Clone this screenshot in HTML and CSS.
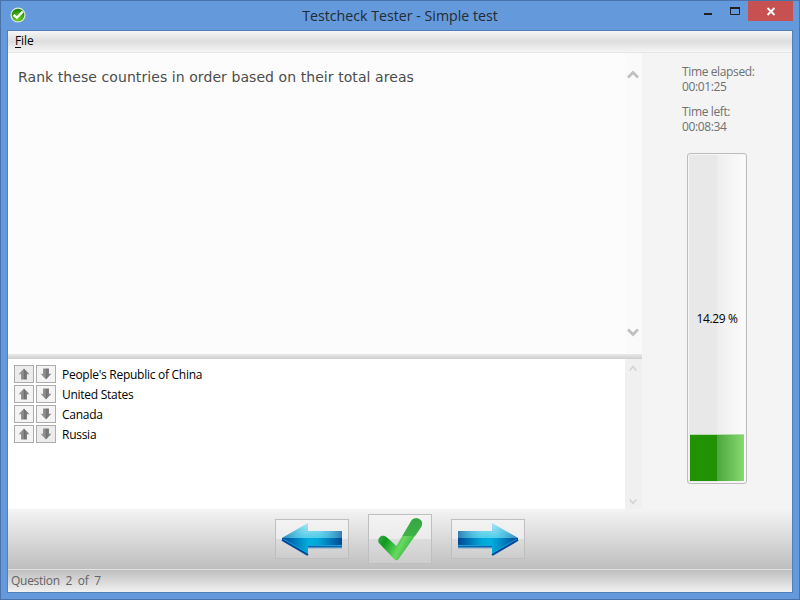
FILE: index.html
```html
<!DOCTYPE html>
<html lang="en">
<head>
<meta charset="utf-8">
<title>Testcheck Tester - Simple test</title>
<link rel="stylesheet" href="styles.css">
</head>
<body>
<svg class="defs" width="0" height="0" aria-hidden="true">
  <defs>
    <linearGradient id="blueTop" x1="0" y1="0" x2="0" y2="1"><stop offset="0" stop-color="#b5e8f5"/><stop offset=".6" stop-color="#3cc8e6"/><stop offset="1" stop-color="#2fbfe2"/></linearGradient>
    <linearGradient id="blueBottom" x1="0" y1="0" x2="1" y2="0"><stop offset="0" stop-color="#00469b"/><stop offset=".45" stop-color="#00b0de"/><stop offset=".6" stop-color="#00a8da"/><stop offset="1" stop-color="#004795"/></linearGradient>
    <linearGradient id="blueShade" x1="0" y1="0" x2="1" y2="0"><stop offset="0" stop-color="#286ca9" stop-opacity=".8"/><stop offset=".4" stop-color="#35c6e8" stop-opacity=".1"/><stop offset=".6" stop-color="#35c6e8" stop-opacity=".2"/><stop offset="1" stop-color="#286ca9" stop-opacity=".85"/></linearGradient>
    <linearGradient id="tick" gradientUnits="userSpaceOnUse" x1="4" y1="18" x2="34" y2="34"><stop offset="0" stop-color="#2fa63c"/><stop offset=".2" stop-color="#0f9a20"/><stop offset=".65" stop-color="#66d960"/><stop offset="1" stop-color="#35b13f"/></linearGradient>
    <linearGradient id="tickTop" gradientUnits="userSpaceOnUse" x1="0" y1="0" x2="0" y2="19"><stop offset="0" stop-color="#35a43f"/><stop offset="1" stop-color="#3db34a"/></linearGradient>
    <linearGradient id="gray" x1="0" y1="0" x2="1" y2="0"><stop offset="0" stop-color="#a0a0a0"/><stop offset=".5" stop-color="#858585"/><stop offset=".52" stop-color="#707070"/><stop offset="1" stop-color="#909090"/></linearGradient>
    <radialGradient id="badge" cx=".5" cy=".8" r=".8"><stop offset="0" stop-color="#6bd51b"/><stop offset="1" stop-color="#16810b"/></radialGradient>
    <clipPath id="upperHalf"><rect width="62" height="17"/></clipPath>
    <clipPath id="lowerHalf"><rect y="17" width="62" height="20"/></clipPath>
    <symbol id="up" viewBox="0 0 12 12"><path d="M6 .5 11.5 6.2H9V11.5H3V6.2H.5Z" fill="url(#gray)"/></symbol>
    <symbol id="down" viewBox="0 0 12 12"><path d="M3 .5H9V5.8H11.5L6 11.5 .5 5.8H3Z" fill="url(#gray)"/></symbol>
    <symbol id="arrow" viewBox="0 0 62 36">
      <path d="M1 19 26 35.5V28H61V25L26 23Z" fill="#5f9bc9" opacity=".4"/>
      <path d="M1 17 27 2V10H61V26H27V34L1 19Z" fill="url(#blueTop)" clip-path="url(#upperHalf)"/>
      <path d="M1 17 27 2V10H61V26H27V34L1 19Z" fill="url(#blueShade)" clip-path="url(#upperHalf)"/>
      <path d="M1 15H61V26H27V34L1 19Z" fill="url(#blueBottom)" clip-path="url(#lowerHalf)"/>
      <path d="M27 24.5H61" stroke="#1b9fd6" stroke-width="1"/>
      <path d="M27 25.8H61" stroke="#0566b2" stroke-width="1.6"/>
      <path d="M1 19 27 34" fill="none" stroke="#004598" stroke-width="2"/>
      <path d="M2 18 26 31.5" fill="none" stroke="#13a4d7" stroke-width=".8"/>
    </symbol>
  </defs>
</svg>
<div class="window">
  <header class="titlebar">
    <svg class="app-icon" viewBox="0 0 16 16"><circle cx="8" cy="8" r="7.6" fill="#dce9d8"/><circle cx="8" cy="8" r="6.3" fill="url(#badge)"/><path d="m3.6 8 3.2 2.7L12.8 4.6" fill="none" stroke="#fff" stroke-width="2.3"/></svg>
    <div class="title"><span>Testcheck Tester - Simple test</span></div>
    <svg class="controls" width="93" height="22" viewBox="0 0 93 22"><path d="M4 12H12V14H4Z" fill="#202020"/><path d="M30.5 7.5H39.5V13.5H30.5Z" fill="none" stroke="#202020"/><path d="M30 7H40" stroke="#202020" stroke-width="2"/><path d="M48 0H93V20H48Z" fill="#c75050"/><path d="m67.5 7 7 7m0-7-7 7" stroke="#fff" stroke-width="1.8"/></svg>
  </header>
  <main class="client">
    <nav class="menu"><span><u>F</u>ile</span></nav>
    <div class="workspace">
      <div class="panes">
        <section class="question">
          <div class="prompt"><span>Rank these countries in order based on their total areas</span></div>
          <div class="scroll"><svg width="12" height="9" viewBox="0 0 12 9"><path d="m1 7.5 5-5 5 5" fill="none" stroke="#c0c0c0" stroke-width="2.8"/></svg><svg width="12" height="9" viewBox="0 0 12 9"><path d="m1 1.5 5 5 5-5" fill="none" stroke="#c0c0c0" stroke-width="2.8"/></svg></div>
        </section>
        <div class="splitter"></div>
        <section class="answers">
          <div class="list">
            <div class="item"><button class="hot"><svg><use href="#up"/></svg></button><button><svg><use href="#down"/></svg></button><span>People's Republic of China</span></div>
            <div class="item"><button><svg><use href="#up"/></svg></button><button><svg><use href="#down"/></svg></button><span>United States</span></div>
            <div class="item"><button><svg><use href="#up"/></svg></button><button><svg><use href="#down"/></svg></button><span>Canada</span></div>
            <div class="item"><button><svg><use href="#up"/></svg></button><button class="hot"><svg><use href="#down"/></svg></button><span>Russia</span></div>
          </div>
          <div class="scroll small"><svg width="8" height="7" viewBox="0 0 8 7"><path d="m.7 5.5 3.3-4 3.3 4" fill="none" stroke="#d0d0d0" stroke-width="1.4"/></svg><svg width="8" height="7" viewBox="0 0 8 7"><path d="m.7 1.5 3.3 4 3.3-4" fill="none" stroke="#d0d0d0" stroke-width="1.4"/></svg></div>
        </section>
      </div>
      <aside class="side">
        <div class="time"><div>Time elapsed:</div><div>00:01:25</div></div>
        <div class="time"><div>Time left:</div><div>00:08:34</div></div>
        <div class="progress"><div class="fill"></div><span class="percent">14.29 %</span></div>
      </aside>
    </div>
    <div class="toolbar">
      <button class="nav"><svg width="62" height="36"><use href="#arrow"/></svg></button>
      <button class="confirm"><svg width="46" height="44" viewBox="0 0 46 44"><path d="M1.500 25.500C0 20 6 16.500 10 20.500L19.500 29 34.500 3.500C38-1 46 2 45 7.500C44.500 10 42 13 40 16L22 41.500C20.500 44 19 43.500 17 42Z" fill="url(#tick)"/><path d="M25.400 19 34.500 3.500C38-1 46 2 45 7.500C44.500 10 42 13 40 16L37.900 19Z" fill="url(#tickTop)"/></svg></button>
      <button class="nav next"><svg width="62" height="36"><use href="#arrow"/></svg></button>
    </div>
    <footer class="status"><span>Question&nbsp; 2&nbsp; of&nbsp; 7</span></footer>
  </main>
</div>
</body>
</html>
```
FILE: styles.css
```css
* { box-sizing: border-box; }
body { margin: 0; overflow: hidden; font: 12px/15px "Open Sans", sans-serif; color: #000; }
.defs { position: absolute; }
.window { width: 800px; height: 600px; border: 1px solid #4a73ab; background: #6499db; padding: 0 6px 6px; }
.titlebar { height: 29px; display: grid; grid-template-columns: 93px 1fr 93px; }
.app-icon { width: 16px; height: 16px; margin: 6px 0 0 3px; }
.title { text-align: center; font-size: 14.2px; line-height: 30px; color: #242b33; white-space: nowrap; }
.client { width: 786px; height: 563px; border: 1px solid #507fb9; display: flex; flex-direction: column; }
.menu { flex: 0 0 22px; border-bottom: 1px solid #e6e6e6; background: linear-gradient(#f5f5f5, #dedede 50%, #f5f5f5); padding: 2px 7px; line-height: 15px; letter-spacing: -.1px; }
.menu u { text-underline-offset: 2px; }
.workspace { flex: 0 0 456px; display: grid; grid-template-columns: 634px 1fr; background: #f4f4f4; }
.panes { display: flex; flex-direction: column; }
.question { flex: 0 0 301px; display: grid; grid-template-columns: 1fr 17px; background: #fcfcfc; }
.prompt { padding: 14px 10px; font: 14px/20px "DejaVu Sans", sans-serif; letter-spacing: .072px; color: #4c4c4c; white-space: nowrap; }
.scroll { background: #fafafa; display: flex; flex-direction: column; align-items: flex-start; justify-content: space-between; padding: 17px 0 17px 2px; }
.splitter { flex: 0 0 5px; background: linear-gradient(#e9e9e9, #cecece); }
.answers { flex: 1; display: grid; grid-template-columns: 1fr 17px; background: #fff; }
.small { background: #f0f0f0; padding: 6px 0 4px 4px; }
.list { padding: 6px; }
.item { height: 20px; display: flex; gap: 2px; }
.item button { width: 20px; height: 18px; padding: 0; border: 1px solid #acacac; background: #f4f4f4; display: grid; place-items: center; }
.item button.hot { background: #ececec; }
.item svg { width: 12px; height: 12px; display: block; }
.item span { margin-left: 4px; line-height: 19px; letter-spacing: -.27px; white-space: nowrap; }
.side { padding: 11px 0 0 40px; color: #707070; }
.time { height: 40px; letter-spacing: -.37px; white-space: nowrap; }
.progress { margin: 9px 0 0 5px; width: 60px; height: 331px; border: 1px solid #bcbcbc; border-radius: 3px; padding: 2px; background: linear-gradient(90deg, #e8e8e8 0 50%, #eee 51%, #fcfcfc); box-shadow: inset 0 0 0 1px #f6f6f6; display: flex; align-items: flex-end; position: relative; }
.fill { width: 54px; height: 47px; border-top: 1px solid #b3dcaa; background: linear-gradient(90deg, #209203 0 50%, #4ca73c 50%, #85d970); }
.percent { position: absolute; inset: 157px 0 auto; text-align: center; letter-spacing: -.35px; color: #000; white-space: nowrap; }
.toolbar { flex: 0 0 60px; display: flex; justify-content: center; align-items: center; gap: 19px; background: linear-gradient(#f4f4f4, #bebebe); }
.toolbar button { border: 1px solid #bfbfbf; padding: 0; background: linear-gradient(#f3f3f3, #ebebeb 50%, #dcdcdc 51%, #cdcdcd); display: grid; place-items: center; }
.nav { width: 74px; height: 40px; }
.confirm { width: 64px; height: 50px; }
.next svg { transform: scaleX(-1); }
.status { flex: 1; border-top: 1px solid #e1e1e1; background: linear-gradient(#bebebe, #f1f1f1); padding: 3px; letter-spacing: -.27px; color: #646464; white-space: pre; }
```
